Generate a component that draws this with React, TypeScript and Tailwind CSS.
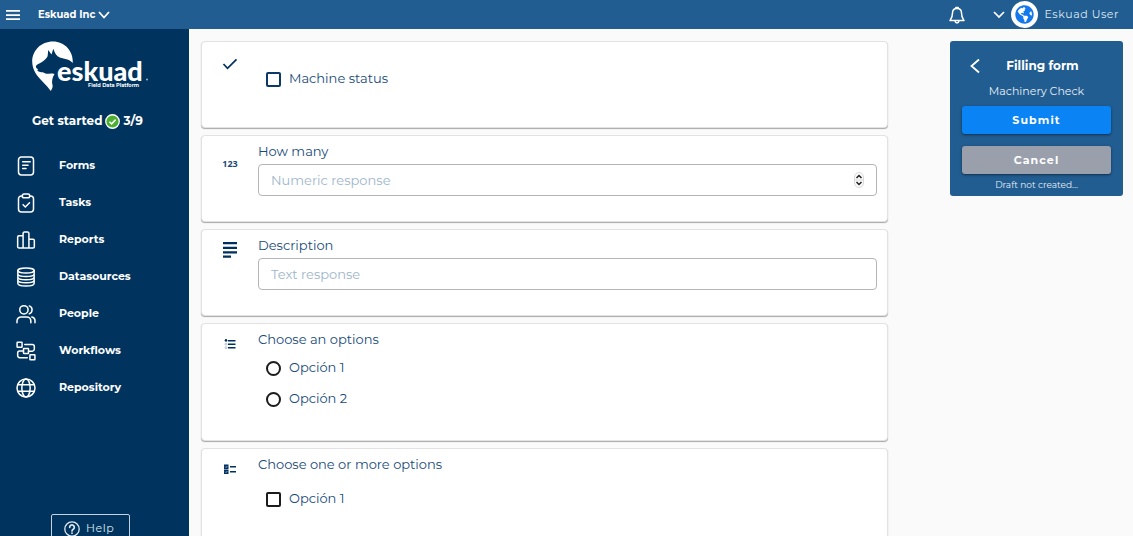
import type { ReactNode } from "react";
import { FaGlobeAmericas } from "react-icons/fa";

function Svg({ className, children, width = 1.8 }: { className: string; children: ReactNode; width?: number }) {
  return (
    <svg viewBox="0 0 24 24" className={className} fill="none" stroke="currentColor" strokeWidth={width} strokeLinecap="round" strokeLinejoin="round" aria-hidden="true">
      {children}
    </svg>
  );
}

const navItems: { label: string; icon: ReactNode }[] = [
  {
    label: "Forms",
    icon: (
      <>
        <rect x="3" y="1.2" width="18" height="21.600" rx="3.5" />
        <path d="M8 7h9M8 11h6.500M8 15h4" />
      </>
    ),
  },
  {
    label: "Tasks",
    icon: (
      <>
        <path d="M8 3.500H6.500A3.500 3.500 0 0 0 3 7v12.300a3.500 3.500 0 0 0 3.500 3.500h11a3.500 3.500 0 0 0 3.500-3.500V7a3.500 3.500 0 0 0-3.500-3.500H16" />
        <rect x="7.500" y="1.200" width="9" height="4.600" rx="2" />
        <path d="m8.500 14 2.700 2.700 5-5" />
      </>
    ),
  },
  {
    label: "Reports",
    icon: (
      <path d="M8.500 21.500H3.500A1.500 1.500 0 0 1 2 20V8.500A1.500 1.500 0 0 1 3.500 7h5M8.500 21.500V4A1.500 1.500 0 0 1 10 2.500h4A1.500 1.500 0 0 1 15.500 4v17.500zM15.500 11h5a1.500 1.500 0 0 1 1.500 1.500V20a1.500 1.500 0 0 1-1.500 1.500h-5" />
    ),
  },
  {
    label: "Datasources",
    icon: (
      <>
        <ellipse cx="12" cy="4.300" rx="9.800" ry="3" />
        <path d="M2.200 4.300v15.200c0 1.900 4.300 3.300 9.800 3.300s9.800-1.400 9.800-3.300V4.300M2.200 8.100c0 1.900 4.300 3.300 9.800 3.300s9.800-1.400 9.800-3.300M2.200 11.900c0 1.900 4.300 3.300 9.800 3.300s9.800-1.400 9.800-3.300M2.200 15.700c0 1.900 4.300 3.300 9.800 3.300s9.800-1.400 9.800-3.300" />
      </>
    ),
  },
  {
    label: "People",
    icon: (
      <>
        <circle cx="9.500" cy="7" r="5" />
        <path d="M1.200 22.500v-2a5 5 0 0 1 5-5h6.600a5 5 0 0 1 5 5v2M16 2.300a5 5 0 0 1 0 9.400M19 15.600a4.500 4.500 0 0 1 3.800 4.400v2.500" />
      </>
    ),
  },
  {
    label: "Workflows",
    icon: (
      <>
        <rect x="1.300" y="1.500" width="6" height="6" rx=".6" />
        <rect x="9" y="9" width="6" height="6" rx=".6" />
        <rect x="16.700" y="16.500" width="6" height="6" rx=".6" />
        <path d="M10.500 4.200h9a2.500 2.500 0 0 1 2.500 2.500v3a2.500 2.500 0 0 1-2.500 2.500H15M9 12H4.500A2.500 2.500 0 0 0 2 14.500v3A2.500 2.500 0 0 0 4.500 20h9" />
      </>
    ),
  },
  {
    label: "Repository",
    icon: (
      <>
        <circle cx="12" cy="12" r="10.800" />
        <ellipse cx="12" cy="12" rx="5" ry="10.800" />
        <path d="M2.200 8h19.600M2.200 16h19.600" />
      </>
    ),
  },
];

function Logo() {
  return (
    <svg viewBox="32 41 118 50" className="h-[50px] w-[118px]" role="img" aria-label="eskuad Field Data Platform">
      <path
        fill="#fff"
        d="M72.800 63C73.500 51 64.500 41.500 53 41.500C41 41.500 32 50.500 32.200 62C32.500 70 37 76 42 81C46 85 49 88.500 50.800 91C52 89 52.800 87.500 52.600 85.500C51.500 82 52 78 54.500 74C50 72.800 47.500 74.500 45.500 73.500C43 71.500 39.500 73 37.300 70.500L38 69.200C36 68.500 35.800 67 36 65.700C38 63.500 41.500 63 44 60.500C46.500 58.500 47.500 57 47.700 55.500L48.200 50L51.500 54.500L53.300 48.700C54.500 51.500 55 54 58 56.500C62.500 59.500 68.500 58 72.800 63Z"
      />
      <text x="57" y="81" fill="#fff" fontFamily='"Lato", sans-serif' fontWeight="900" fontSize="27">
        eskuad
      </text>
      <circle cx="147" cy="79.500" r="1" fill="#9fb6ca" />
      <text x="88" y="87" fill="#fff" fontFamily='"Montserrat", "Inter", sans-serif' fontWeight="700" fontSize="5">
        Field Data Platform
      </text>
    </svg>
  );
}

function Card({ icon, children, className = "" }: { icon: ReactNode; children: ReactNode; className?: string }) {
  return (
    <section className={`flex rounded-[4px] border border-[#e2e2e2] bg-white pr-[10px] shadow-[0_1px_1px_#a8a8a8] ${className}`}>
      <div className="flex w-14 shrink-0 justify-center text-[#00305f]">{icon}</div>
      <div className="min-w-0 flex-1">{children}</div>
    </section>
  );
}

function Choice({ id, label, type, name, tone = "border-[#1c1c1c] checked:bg-[#1c1c1c]" }: { id: string; label: string; type: "checkbox" | "radio"; name: string; tone?: string }) {
  return (
    <div className="flex h-5 items-center gap-2 pl-2">
      <input
        id={id}
        type={type}
        name={name}
        className={`size-[15px] shrink-0 appearance-none border-2 bg-white ${tone} ${type === "radio" ? "rounded-full" : "rounded-[2px]"}`}
      />
      <label htmlFor={id}>{label}</label>
    </div>
  );
}

const fieldClass =
  "block h-8 w-full appearance-none rounded-[4px] border border-[#b5b5b5] bg-white px-3 text-[13px] outline-none placeholder:text-[#9db6cb] [&::-webkit-inner-spin-button]:appearance-none";

export default function App() {
  return (
    <div className="flex h-screen flex-col overflow-hidden bg-[#fafafa] font-[Montserrat,Inter,sans-serif] text-[#174a7a]">
      <header className="flex h-[29px] shrink-0 items-center bg-[#215d91] pr-[14px] pl-[6px] text-white">
        <button type="button" aria-label="Menu" className="mr-[18px]">
          <svg viewBox="0 0 14 12" className="h-3 w-[14px]" fill="currentColor" aria-hidden="true">
            <path d="M0 1h14v1.700H0zM0 5.200h14v1.700H0zM0 9.300h14V11H0z" />
          </svg>
        </button>
        <button type="button" className="flex items-center gap-[3px] text-[10px] font-bold">
          Eskuad Inc
          <svg viewBox="0 0 12 8" className="h-2 w-3" fill="none" stroke="currentColor" strokeWidth="1.800" aria-hidden="true">
            <path d="M1 1l5 5.500L11 1" />
          </svg>
        </button>
        <button type="button" aria-label="Notifications" className="mr-7 ml-auto">
          <svg viewBox="0 0 16 18" className="h-[18px] w-4" fill="none" stroke="currentColor" strokeWidth="1.500" strokeLinejoin="round" aria-hidden="true">
            <path d="M8 2.500c-3 0-4.500 2-4.500 4.500 0 4-1 5-2.500 7.500h14C13.500 12 12.500 11 12.500 7c0-2.500-1.500-4.500-4.500-4.500z" />
            <path d="M6.800 2.300V1.400h2.400v.9M6 15c.3 1.300 1 1.900 2 1.900s1.700-.6 2-1.900" />
          </svg>
        </button>
        <button type="button" className="flex items-center text-[11px] tracking-wider text-[#dce8f3]">
          <svg viewBox="0 0 12 8" className="mr-[6px] h-2 w-3" fill="none" stroke="#fff" strokeWidth="1.700" aria-hidden="true">
            <path d="M1 1l5 5L11 1" />
          </svg>
          <span className="mr-[6px] flex size-[27px] items-center justify-center rounded-full bg-white">
            <FaGlobeAmericas className="size-[19px] text-[#1579ee]" aria-hidden="true" />
          </span>
          Eskuad User
        </button>
      </header>

      <div className="flex min-h-0 flex-1">
        <aside className="w-[189px] shrink-0 overflow-hidden bg-[#00345f] text-white">
          <div className="px-8 pt-3">
            <Logo />
          </div>
          <p className="mt-5 flex items-center gap-[3px] pl-8 text-[12px] leading-5 font-bold">
            Get started
            <svg viewBox="0 0 16 16" className="size-[15px]" aria-hidden="true">
              <circle cx="8" cy="8" r="7.200" fill="#4caf2f" stroke="#fff" strokeWidth="1.400" />
              <path d="m4.800 8.300 2.300 2.200 4.200-4.500" fill="none" stroke="#fff" strokeWidth="1.600" />
            </svg>
            3/9
          </p>
          <nav className="mt-4">
            {navItems.map((item) => (
              <a key={item.label} href={`#${item.label.toLowerCase()}`} className="flex h-[37px] items-center gap-[23px] pl-4 text-[11px] font-bold">
                <span className="flex w-5 justify-center">
                  <Svg className="size-5">{item.icon}</Svg>
                </span>
                {item.label}
              </a>
            ))}
          </nav>
          <button type="button" className="mt-[108px] ml-[51px] flex h-[29px] w-[79px] items-center gap-[6px] rounded-[2px] border border-[#c5d1dc] pl-3 text-[11px] tracking-wider text-[#dce6ef]">
            <Svg className="size-4" width={2}>
              <circle cx="12" cy="12" r="10.800" />
              <path d="M8.500 9.500a3.500 3.500 0 1 1 5.500 2.800c-1.300.9-2 1.300-2 2.700M12 18v.2" strokeWidth="2.600" />
            </Svg>
            Help
          </button>
        </aside>

        <main className="flex min-w-0 flex-1 items-start gap-[62px] overflow-hidden pt-3 pr-[10px] pl-3">
          <form className="flex min-w-0 flex-1 flex-col gap-[7px] text-[13px]">
            <Card
              className="h-[87px]"
              icon={
                <svg viewBox="0 0 16 12" className="mt-4 h-3 w-4" fill="none" stroke="currentColor" strokeWidth="1.700" aria-hidden="true">
                  <path d="m1.500 6 4 4.300 9-9" />
                </svg>
              }
            >
              <div className="pt-[27px]">
                <Choice id="machine-status" name="machine-status" label="Machine status" type="checkbox" tone="border-[#0c3a68] checked:bg-[#0c3a68]" />
              </div>
            </Card>

            <Card className="h-[87px]" icon={<span className="pt-[22px] font-['Noto_Sans',sans-serif] text-[9px] leading-3 font-bold text-[#174a7a]">123</span>}>
              <label htmlFor="how-many" className="mt-[5px] mb-[3px] block leading-5">
                How many
              </label>
              <div className="relative">
                <input id="how-many" type="number" placeholder="Numeric response" className={fieldClass} />
                <svg viewBox="0 0 10 16" className="pointer-events-none absolute top-2 right-[13px] h-4 w-[10px]" aria-hidden="true">
                  <rect x=".5" y=".5" width="9" height="15" rx="4.500" fill="#fafafa" stroke="#d9d9d9" />
                  <path d="M0.500 8h9" stroke="#d9d9d9" />
                  <path d="m2.500 6 2.500-2.500L7.500 6M2.500 10 5 12.500 7.500 10" fill="none" stroke="#222" strokeWidth="1.500" />
                </svg>
              </div>
            </Card>

            <Card
              className="h-[87px]"
              icon={
                <svg viewBox="0 0 14 16" className="mt-3 h-4 w-[14px]" fill="currentColor" aria-hidden="true">
                  <path d="M0 0h14v2.200H0zM0 4.700h14v2.200H0zM0 9.300h14v2.200H0zM0 13.500h8v2.200H0z" />
                </svg>
              }
            >
              <label htmlFor="description" className="mt-[5px] mb-[3px] block leading-5">
                Description
              </label>
              <input id="description" type="text" placeholder="Text response" className={fieldClass} />
            </Card>

            <Card
              className="h-[118px]"
              icon={
                <svg viewBox="0 0 12 10" className="mt-[15px] h-[10px] w-3" fill="currentColor" aria-hidden="true">
                  <path d="M4 .9h7.500v1.500H4zM4 4.400h7.500v1.500H4zM4 8h7.500v1.500H4z" />
                  <path d="m.5 1 1.500.8L3.500 1 2 3z" />
                  <circle cx="2" cy="1.300" r="1.200" />
                  <circle cx="2" cy="5.200" r="1" fill="none" stroke="#86a0b8" strokeWidth=".6" />
                  <circle cx="2" cy="8.700" r="1" fill="none" stroke="#86a0b8" strokeWidth=".6" />
                </svg>
              }
            >
              <fieldset>
                <legend className="pt-[5px] leading-5">Choose an options</legend>
                <div className="mt-[9px] flex flex-col gap-[11px]">
                  <Choice id="single-1" name="single" label="Opción 1" type="radio" />
                  <Choice id="single-2" name="single" label="Opción 2" type="radio" />
                </div>
              </fieldset>
            </Card>

            <Card
              className="h-[140px]"
              icon={
                <svg viewBox="0 0 12 10" className="mt-[15px] h-[10px] w-3" fill="currentColor" aria-hidden="true">
                  <path d="M0 .5h4.500V5H0zM0 5.500h4.500V10H0zM6 2h6v1.500H6zM6 7h6v1.500H6z" />
                  <path d="m1.200 2.700.8.800 1.400-1.500M1.200 7.700l.8.800L3.400 7" fill="none" stroke="#fff" strokeWidth=".6" />
                </svg>
              }
            >
              <fieldset>
                <legend className="pt-[5px] leading-5">Choose one or more options</legend>
                <div className="mt-[15px] flex flex-col gap-6">
                  <Choice id="multi-1" name="multi" label="Opción 1" type="checkbox" />
                  <Choice id="multi-2" name="multi" label="Opción 2" type="checkbox" tone="border-[#d6d6d6] checked:bg-[#1c1c1c]" />
                </div>
              </fieldset>
            </Card>
          </form>

          <aside className="w-[173px] shrink-0 rounded-[3px] bg-[#215d91] px-3 pt-[15px] pb-[3px] text-center text-[#e6eef6]">
            <div className="flex h-5 items-center">
              <button type="button" aria-label="Back" className="ml-2">
                <svg viewBox="0 0 10 16" className="h-4 w-[10px]" fill="none" stroke="#fff" strokeWidth="1.800" aria-hidden="true">
                  <path d="M9 1.500 1.500 8 9 14.500" />
                </svg>
              </button>
              <h1 className="flex-1 pr-[6px] text-[12px] font-bold text-white">Filling form</h1>
            </div>
            <p className="mt-[5px] text-[11px] leading-5">Machinery Check</p>
            <button type="button" className="mt-[5px] block h-7 w-full rounded-[3px] bg-[#0a84f4] text-[11px] font-bold tracking-widest text-white shadow-sm shadow-black/40">
              Submit
            </button>
            <button type="button" className="mt-3 block h-7 w-full rounded-[3px] bg-[#9a9fac] text-[11px] font-bold tracking-widest text-white shadow-sm shadow-black/40">
              Cancel
            </button>
            <p className="mt-[3px] text-[9px] leading-4">Draft not created...</p>
          </aside>
        </main>
      </div>
    </div>
  );
}
